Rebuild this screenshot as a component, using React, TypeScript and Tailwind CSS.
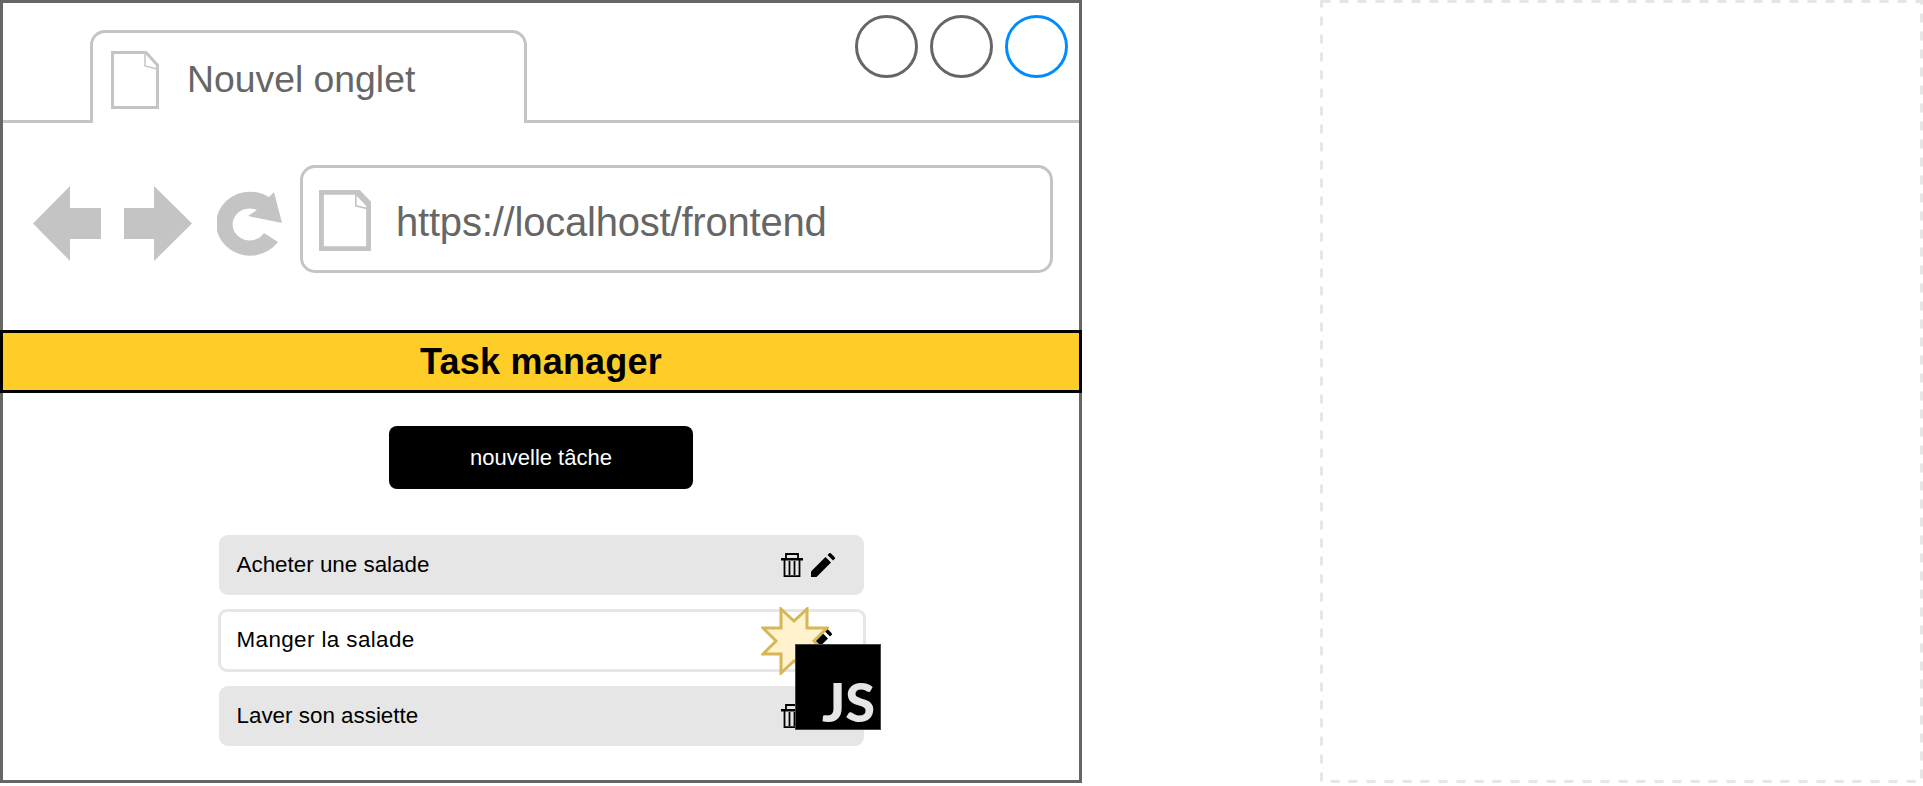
const sans = "font-['Liberation_Sans',Arial,sans-serif]";

function DocIcon({ className, stroke }: { className: string; stroke: number }) {
  return (
    <svg viewBox="0 0 48 58" className={className} preserveAspectRatio="none">
      <path d="M1.5 1.5H35L46.5 14V56.5H1.5Z" fill="#fff" stroke="#c4c4c4" strokeWidth={stroke} />
      <path d="M34 2V15L46 18" fill="none" stroke="#c4c4c4" strokeWidth="1.5" />
    </svg>
  );
}

function TrashIcon() {
  return (
    <svg viewBox="0 0 22 24" className="w-[22px] h-[24px]">
      <path d="M0 5H22V7.5H0Z" fill="#000" />
      <path d="M5 5V1H17V5" fill="none" stroke="#000" strokeWidth="1.8" />
      <path d="M3.5 7V23.1H18.5V7" fill="none" stroke="#000" strokeWidth="1.8" />
      <path d="M8.5 8V22M13.5 8V22" stroke="#000" strokeWidth="1.8" />
    </svg>
  );
}

function PencilIcon() {
  return (
    <svg viewBox="0 0 24 24" className="w-[24px] h-[24px]">
      <path d="M0 18.5L14.5 4L20 9.5L5.5 24H0Z" fill="#000" />
      <path d="M16.5 2L18.5 0H19.5L24 4.5V5.5L22 7.5Z" fill="#000" />
    </svg>
  );
}

function TaskRow({ label, active }: { label: string; active?: boolean }) {
  return (
    <div
      className={
        active
          ? "flex items-center justify-between h-[63px] w-[648px] -ml-[1px] pl-[16px] pr-[31px] bg-white border-[3px] border-[#e6e6e6] rounded-[9px]"
          : "flex items-center justify-between h-[60px] w-[645px] pl-[18px] pr-[29px] bg-[#e6e6e6] rounded-[9px]"
      }
    >
      <span className={active ? "text-[22.4px] leading-none tracking-[0.4px] text-black" : "text-[22.4px] leading-none text-black"}>{label}</span>
      <div className="flex items-center gap-[8px]">
        <TrashIcon />
        <PencilIcon />
      </div>
    </div>
  );
}

export default function App() {
  return (
    <div className={`flex justify-between w-[1923px] h-[786px] bg-white overflow-hidden ${sans}`}>
      <div className="relative flex flex-col w-[1082px] h-[783px] border-[3px] border-[#666666]">
        {/* tab bar */}
        <div className="flex items-start justify-between h-[120px] border-b-[3px] border-[#c4c4c4]">
          <div className="flex items-center w-[437px] h-[93px] ml-[87px] mt-[27px] pl-[18px] bg-white border-[3px] border-b-0 border-[#c4c4c4] rounded-t-[15px]">
            <DocIcon className="w-[48px] h-[58px] mt-[3px]" stroke={3} />
            <span className="ml-[28px] mt-[3px] text-[37.33px] leading-none text-[#666666]">Nouvel onglet</span>
          </div>
          <div className="flex gap-[12px] mt-[12px] mr-[11px]">
            <div className="w-[63px] h-[63px] rounded-full border-[3px] border-[#666666]" />
            <div className="w-[63px] h-[63px] rounded-full border-[3px] border-[#666666]" />
            <div className="w-[63px] h-[63px] rounded-full border-[3px] border-[#008cff]" />
          </div>
        </div>

        {/* address bar */}
        <div className="flex items-center h-[207px] pl-[30px] pb-[6px]">
          <svg viewBox="0 0 159 75" className="w-[159px] h-[75px]">
            <path d="M0 37.5L37 0V22H68V53H37V75Z" fill="#c4c4c4" />
            <path d="M159 37.5L121 0V22H91V53H121V75Z" fill="#c4c4c4" />
          </svg>
          <svg viewBox="216 188 66 70" className="w-[66px] h-[70px] ml-[25px]">
            <path d="M277 241A34 32 0 1 1 268 196L273 191L281 222L247 215L256 209A17 16 0 1 0 263 232Z" fill="#c4c4c4" />
          </svg>
          <div className="flex items-center w-[753px] h-[108px] ml-[17px] mb-[9px] pl-[16px] border-[3px] border-[#c4c4c4] rounded-[15px]">
            <DocIcon className="w-[52px] h-[61px] mt-[3px]" stroke={6} />
            <span className="ml-[25px] mt-[5px] text-[40px] leading-none tracking-[-0.2px] text-[#666666]">https://localhost/frontend</span>
          </div>
        </div>

        {/* header */}
        <div className="flex items-center justify-center h-[63px] pt-[1px] -mx-[3px] bg-[#ffcd28] border-[3px] border-black">
          <h1 className="text-[36px] leading-none font-bold tracking-[0.2px] text-black">Task manager</h1>
        </div>

        {/* content */}
        <div className="flex flex-col items-center pt-[33px]">
          <button className="w-[304px] h-[63px] bg-black text-white text-[22px] leading-none rounded-[8px]">
            nouvelle tâche
          </button>
          <div className="flex flex-col gap-[14px] mt-[46px] ml-[2px]">
            <TaskRow label="Acheter une salade" />
            <TaskRow label="Manger la salade" active />
            <TaskRow label="Laver son assiette" />
          </div>
        </div>

        {/* click marker + js badge sit over the row icons */}
        <svg viewBox="0 0 68 68" className="absolute left-[758px] top-[604px] w-[68px] h-[68px]">
          <path
            d="M20 2L33 14L46 2L46 21L66 21L53 34L66 47L46 47L46 66L33 54L20 66L20 47L2 47L15 34L2 21L20 21Z"
            fill="#fff2cc"
            stroke="#d6b656"
            strokeWidth="3"
          />
        </svg>
        <div className="absolute left-[792px] top-[641px] flex items-end justify-end w-[86px] h-[86px] pr-[5px] bg-black border border-[#444444]">
          <span className="font-['Lato',sans-serif] font-black text-[54px] leading-[54px] text-[#e6e6e6]">JS</span>
        </div>
      </div>

      <div className="relative w-[603px] h-[783px]">
        <svg className="absolute inset-0 w-full h-full">
          <rect x="1.5" y="1.5" width="600" height="780" fill="none" stroke="#e6e6e6" strokeWidth="3" strokeDasharray="9 9" />
        </svg>
      </div>
    </div>
  );
}
